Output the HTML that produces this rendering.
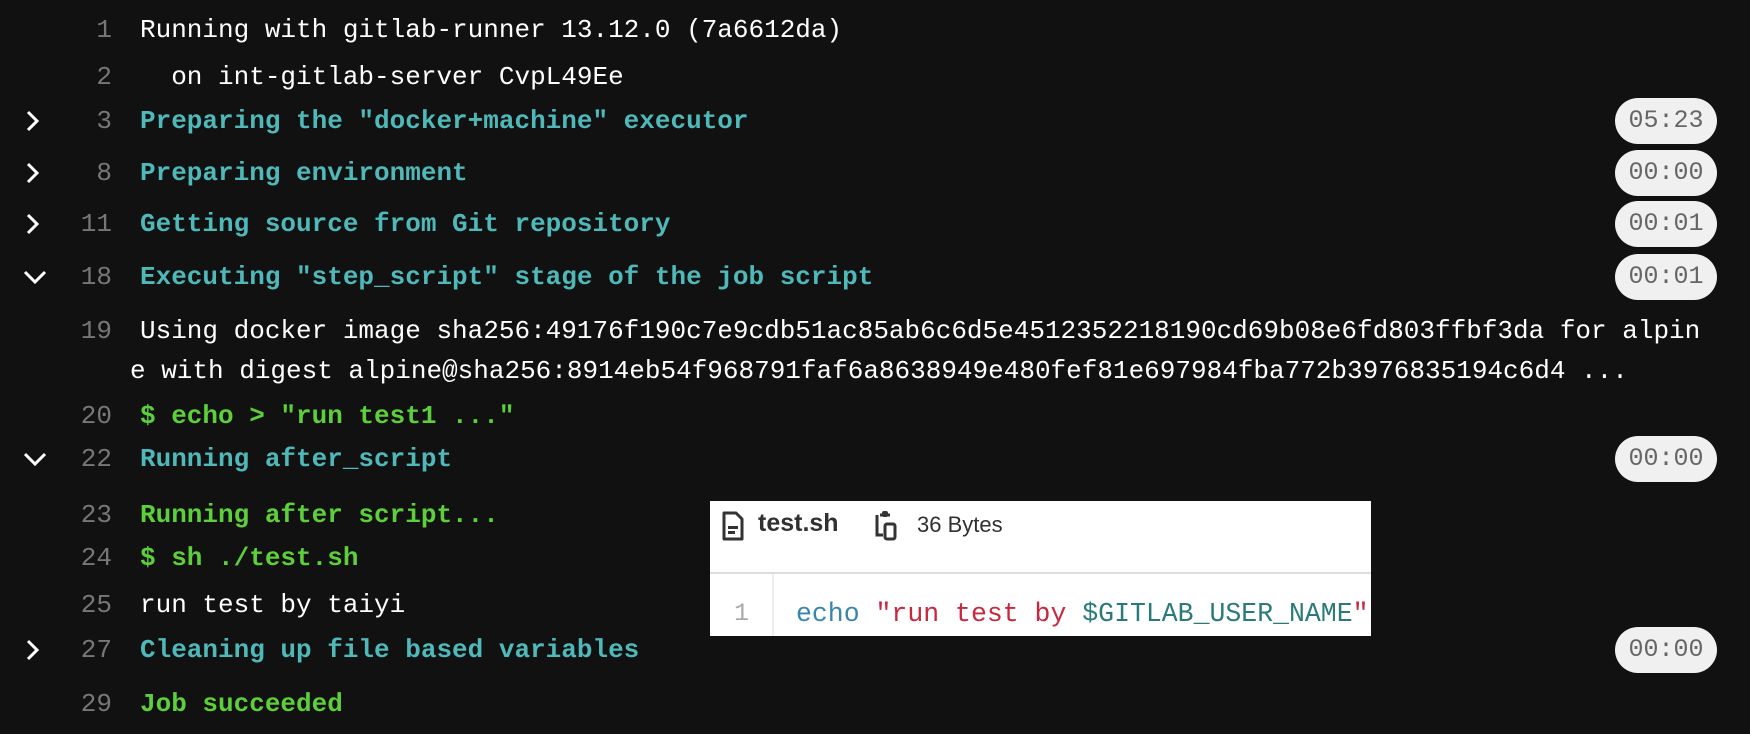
<!DOCTYPE html>
<html><head><meta charset="utf-8"><style>
html,body{margin:0;padding:0;background:#111;width:1750px;height:734px;overflow:hidden}
body{position:relative;font-family:"Liberation Mono","DejaVu Sans Mono",monospace;font-size:26px;color:#fff}
.l{position:absolute;left:0;width:1750px;height:30px;line-height:30px;white-space:pre}
.n{position:absolute;left:32px;color:#777;text-align:right;width:80px}
.t{position:absolute;left:140px}
.s{color:#4fb8b8;font-weight:bold}
.g{color:#5ccf3a;font-weight:bold}
.c{position:absolute;left:22px;top:3px}
.b{position:absolute;left:1615px;width:102px;height:46px;border-radius:23px;background:#f0f0f0;color:#666;font-size:25px;line-height:46px;text-align:center}
.pop{position:absolute;left:710px;top:501px;width:661px;height:135px;background:#fff;font-family:"Liberation Sans",sans-serif}
</style></head><body>
<div class="l" style="top:15px"><span class="n">1</span><span class="t">Running with gitlab-runner 13.12.0 (7a6612da)</span></div>
<div class="l" style="top:62px"><span class="n">2</span><span class="t">  on int-gitlab-server CvpL49Ee</span></div>

<div class="l" style="top:106px"><svg class="c" width="22" height="24" viewBox="0 0 22 24"><path d="M6 3l9 9-9 9" stroke="#fff" stroke-width="3" fill="none"/></svg><span class="n">3</span><span class="t s">Preparing the "docker+machine" executor</span></div>
<div class="b" style="top:98px">05:23</div>
<div class="l" style="top:158px"><svg class="c" width="22" height="24" viewBox="0 0 22 24"><path d="M6 3l9 9-9 9" stroke="#fff" stroke-width="3" fill="none"/></svg><span class="n">8</span><span class="t s">Preparing environment</span></div>
<div class="b" style="top:150px">00:00</div>
<div class="l" style="top:209px"><svg class="c" width="22" height="24" viewBox="0 0 22 24"><path d="M6 3l9 9-9 9" stroke="#fff" stroke-width="3" fill="none"/></svg><span class="n">11</span><span class="t s">Getting source from Git repository</span></div>
<div class="b" style="top:201px">00:01</div>
<div class="l" style="top:262px"><svg class="c" width="26" height="24" viewBox="0 0 26 24"><path d="M3 7l10 10 10-10" stroke="#fff" stroke-width="3" fill="none"/></svg><span class="n">18</span><span class="t s">Executing "step_script" stage of the job script</span></div>
<div class="b" style="top:254px">00:01</div>
<div class="l" style="top:316px"><span class="n">19</span><span class="t">Using docker image sha256:49176f190c7e9cdb51ac85ab6c6d5e4512352218190cd69b08e6fd803ffbf3da for alpin</span></div>
<div class="l" style="top:356px"><span class="t" style="left:130px">e with digest alpine@sha256:8914eb54f968791faf6a8638949e480fef81e697984fba772b3976835194c6d4 ...</span></div>
<div class="l" style="top:401px"><span class="n">20</span><span class="t g">$ echo &gt; "run test1 ..."</span></div>
<div class="l" style="top:444px"><svg class="c" width="26" height="24" viewBox="0 0 26 24"><path d="M3 7l10 10 10-10" stroke="#fff" stroke-width="3" fill="none"/></svg><span class="n">22</span><span class="t s">Running after_script</span></div>
<div class="b" style="top:436px">00:00</div>
<div class="l" style="top:500px"><span class="n">23</span><span class="t g">Running after script...</span></div>
<div class="l" style="top:543px"><span class="n">24</span><span class="t g">$ sh ./test.sh</span></div>
<div class="l" style="top:590px"><span class="n">25</span><span class="t">run test by taiyi</span></div>
<div class="l" style="top:635px"><svg class="c" width="22" height="24" viewBox="0 0 22 24"><path d="M6 3l9 9-9 9" stroke="#fff" stroke-width="3" fill="none"/></svg><span class="n">27</span><span class="t s">Cleaning up file based variables</span></div>
<div class="b" style="top:627px">00:00</div>
<div class="l" style="top:689px"><span class="n">29</span><span class="t g">Job succeeded</span></div>

<div class="pop">
 <svg style="position:absolute;left:12px;top:10px" width="22" height="30" viewBox="0 0 22 30"><path d="M2 2h12l6 6v20H2z" fill="none" stroke="#333" stroke-width="3" stroke-linejoin="round"/><rect x="6" y="15" width="10" height="3" fill="#333"/><rect x="6" y="20" width="7" height="3" fill="#333"/></svg>
 <div style="position:absolute;left:48px;top:8px;font-size:25px;font-weight:bold;color:#303030">test.sh</div>
 <svg style="position:absolute;left:164px;top:8px" width="24" height="32" viewBox="0 0 24 32"><path d="M6 6h10M3 6v20h6" fill="none" stroke="#333" stroke-width="3"/><rect x="8" y="2" width="6" height="6" rx="2" fill="#333"/><rect x="11" y="15" width="10" height="15" rx="2" fill="none" stroke="#333" stroke-width="3"/></svg>
 <div style="position:absolute;left:207px;top:11px;font-size:22px;color:#303030">36 Bytes</div>
 <div style="position:absolute;left:0;right:0;top:71px;height:2px;background:#ddd"></div>
 <div style="position:absolute;left:62px;top:73px;bottom:0;width:2px;background:#eee"></div>
 <div style="position:absolute;left:24px;top:98px;font-family:'Liberation Mono',monospace;font-size:25px;color:#aaa">1</div>
 <div style="position:absolute;left:86px;top:98px;font-family:'Liberation Mono',monospace;font-size:26.5px;white-space:pre"><span style="color:#3a85b0">echo</span> <span style="color:#c8283f">"run test by </span><span style="color:#2b7a7a">$GITLAB_USER_NAME</span><span style="color:#c8283f">"</span></div>
</div>
</body></html>
